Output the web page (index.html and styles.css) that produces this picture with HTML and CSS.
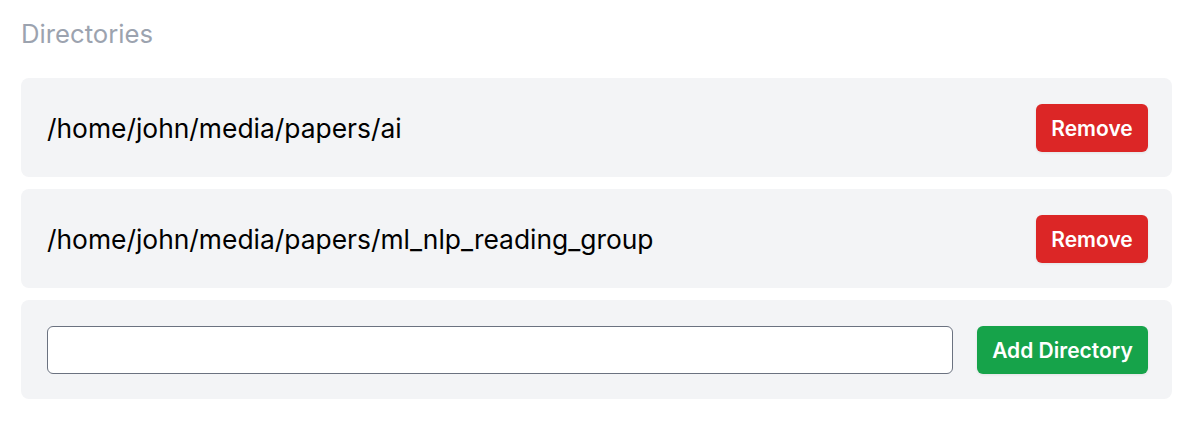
FILE: index.html
```html
<!DOCTYPE html>
<html>
<head>
<meta charset="utf-8">
<link rel="stylesheet" href="styles.css">
</head>
<body>
<div class="page">
  <h2 class="title">Directories</h2>
  <div class="list">
    <div class="card">
      <span class="path">/home/john/media/papers/ai</span>
      <button class="btn btn-red">Remove</button>
    </div>
    <div class="card">
      <span class="path">/home/john/media/papers/ml_nlp_reading_group</span>
      <button class="btn btn-red">Remove</button>
    </div>
    <div class="card">
      <input class="input" type="text">
      <button class="btn btn-green">Add Directory</button>
    </div>
  </div>
</div>
</body>
</html>
```

FILE: styles.css
```css
* { box-sizing: border-box; }
html, body { margin: 0; padding: 0; background: #ffffff; }
body { font-family: Inter, "Noto Sans", sans-serif; }
.page { width: 1151px; margin-left: 21px; padding-top: 18px; }
.title {
  margin: 0 0 28px 0;
  font-size: 25.7px;
  font-weight: 400;
  line-height: 32px;
  color: #9ca3af;
}
.list { display: flex; flex-direction: column; gap: 12px; }
.card {
  display: flex;
  align-items: center;
  gap: 24px;
  background: #f3f4f6;
  border-radius: 8px;
  padding: 26px 24px 25px 26px;
}
.path {
  flex: 1;
  font-size: 26.4px;
  line-height: 32px;
  color: #000000;
}
.btn {
  border: none;
  border-radius: 6px;
  height: 48px;
  padding: 0;
  font-family: Inter, "Noto Sans", sans-serif;
  font-size: 21px;
  font-weight: 600;
  color: #ffffff;
  box-shadow: 0 1px 3px rgba(0,0,0,0.08);
}
.btn-red { background: #dc2626; width: 112px; }
.btn-green { background: #16a34a; width: 171px; }
.input {
  flex: 1;
  height: 48px;
  border: 1px solid #6b7280;
  border-radius: 6px;
  background: #ffffff;
}
```
